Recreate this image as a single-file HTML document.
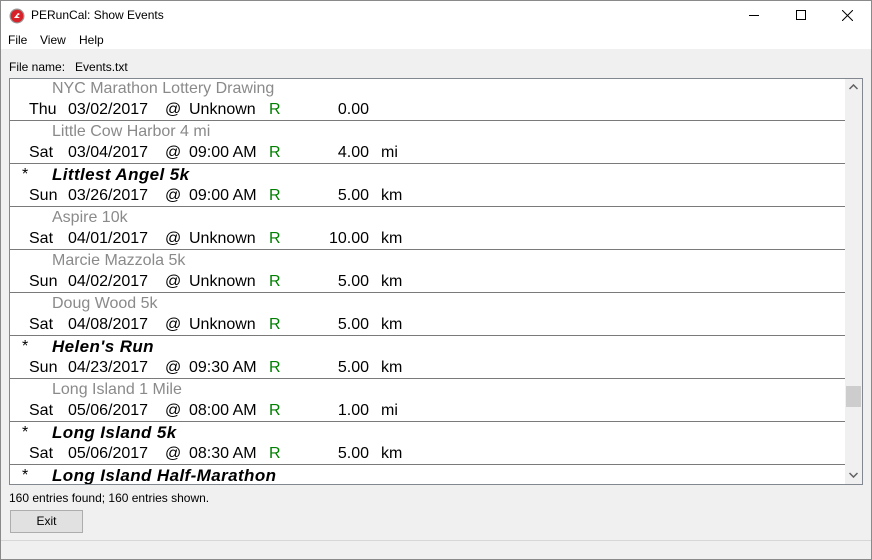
<!DOCTYPE html>
<html><head><meta charset="utf-8"><style>
*{margin:0;padding:0;box-sizing:border-box}
body{width:872px;height:560px;background:#f0f0f0;font-family:"Liberation Sans",sans-serif;position:relative;overflow:hidden}
.a{position:absolute;white-space:nowrap}
#title{left:0;top:0;width:872px;height:30px;background:#fff}
#menu{left:0;top:30px;width:872px;height:19px;background:#fff;font-size:12px}
#list{left:9px;top:78px;width:854px;height:407px;background:#fff;border:1px solid #828790;overflow:hidden}
.r{position:absolute;left:0;width:835px;height:43px;border-bottom:1px solid #7a7a7a;font-size:16px;color:#000}
.r span{position:absolute;white-space:nowrap;line-height:20px}
.t{left:42px;top:1px;color:#8a8a8a}
.b{left:42px;top:1px;font-weight:bold;font-style:italic;color:#000;font-size:17px;letter-spacing:0.4px}
.s{left:12px;top:1px}
.d{left:19px;top:22px}.dt{left:58px;top:22px}.at{left:155px;top:22px}.tm{left:179px;top:22px}
.R{left:259px;top:22px;color:#008000}.n{right:476px;top:22px}.u{left:371px;top:22px}
#sb{left:835px;top:0;width:17px;height:405px;background:#f0f0f0}
</style></head><body>
<div id="title" class="a">
<svg class="a" style="left:9px;top:8px" width="16" height="16" viewBox="0 0 16 16"><circle cx="8" cy="8" r="7.5" fill="#999"/><circle cx="8" cy="8" r="6.3" fill="#d8222a"/><path d="M5 10 L9 5 L11 6 L8 8 L11 10 Z" fill="#fff"/></svg>
<div class="a" style="left:31px;top:8px;font-size:12px">PERunCal: Show Events</div>
<div class="a" style="left:749px;top:15px;width:10px;height:1px;background:#000"></div>
<div class="a" style="left:796px;top:10px;width:10px;height:10px;border:1px solid #000"></div>
<svg class="a" style="left:842px;top:10px" width="11" height="11"><path d="M0 0L11 11M11 0L0 11" stroke="#000" stroke-width="1"/></svg>
</div>
<div id="menu" class="a"><span class="a" style="left:8px;top:3px">File</span><span class="a" style="left:40px;top:3px">View</span><span class="a" style="left:79px;top:3px">Help</span></div>
<div class="a" style="left:9px;top:60px;font-size:12px">File name:&nbsp;&nbsp;&nbsp;Events.txt</div>
<div id="list" class="a">
<div class="r" style="top:-1px"><span class="t">NYC Marathon Lottery Drawing</span><span class="d">Thu</span><span class="dt">03/02/2017</span><span class="at">@</span><span class="tm">Unknown</span><span class="R">R</span><span class="n">0.00</span></div>
<div class="r" style="top:42px"><span class="t">Little Cow Harbor 4 mi</span><span class="d">Sat</span><span class="dt">03/04/2017</span><span class="at">@</span><span class="tm">09:00 AM</span><span class="R">R</span><span class="n">4.00</span><span class="u">mi</span></div>
<div class="r" style="top:85px"><span class="s">*</span><span class="b">Littlest Angel 5k</span><span class="d">Sun</span><span class="dt">03/26/2017</span><span class="at">@</span><span class="tm">09:00 AM</span><span class="R">R</span><span class="n">5.00</span><span class="u">km</span></div>
<div class="r" style="top:128px"><span class="t">Aspire 10k</span><span class="d">Sat</span><span class="dt">04/01/2017</span><span class="at">@</span><span class="tm">Unknown</span><span class="R">R</span><span class="n">10.00</span><span class="u">km</span></div>
<div class="r" style="top:171px"><span class="t">Marcie Mazzola 5k</span><span class="d">Sun</span><span class="dt">04/02/2017</span><span class="at">@</span><span class="tm">Unknown</span><span class="R">R</span><span class="n">5.00</span><span class="u">km</span></div>
<div class="r" style="top:214px"><span class="t">Doug Wood 5k</span><span class="d">Sat</span><span class="dt">04/08/2017</span><span class="at">@</span><span class="tm">Unknown</span><span class="R">R</span><span class="n">5.00</span><span class="u">km</span></div>
<div class="r" style="top:257px"><span class="s">*</span><span class="b">Helen's Run</span><span class="d">Sun</span><span class="dt">04/23/2017</span><span class="at">@</span><span class="tm">09:30 AM</span><span class="R">R</span><span class="n">5.00</span><span class="u">km</span></div>
<div class="r" style="top:300px"><span class="t">Long Island 1 Mile</span><span class="d">Sat</span><span class="dt">05/06/2017</span><span class="at">@</span><span class="tm">08:00 AM</span><span class="R">R</span><span class="n">1.00</span><span class="u">mi</span></div>
<div class="r" style="top:343px"><span class="s">*</span><span class="b">Long Island 5k</span><span class="d">Sat</span><span class="dt">05/06/2017</span><span class="at">@</span><span class="tm">08:30 AM</span><span class="R">R</span><span class="n">5.00</span><span class="u">km</span></div>
<div class="r" style="top:386px"><span class="s">*</span><span class="b">Long Island Half-Marathon</span></div>
<div id="sb" class="a">
<svg class="a" style="left:4px;top:5px" width="9" height="6"><path d="M0.5 5L4.5 1L8.5 5" stroke="#606060" stroke-width="1.5" fill="none"/></svg>
<div class="a" style="left:1px;top:307px;width:15px;height:21px;background:#cdcdcd"></div>
<svg class="a" style="left:4px;top:393px" width="9" height="6"><path d="M0.5 1L4.5 5L8.5 1" stroke="#606060" stroke-width="1.5" fill="none"/></svg>
</div>
</div>
<div class="a" style="left:9px;top:491px;font-size:12px">160 entries found; 160 entries shown.</div>
<div class="a" style="left:10px;top:510px;width:73px;height:23px;background:#e1e1e1;border:1px solid #adadad;font-size:12px;text-align:center;line-height:21px">Exit</div>
<div class="a" style="left:0;top:540px;width:872px;height:1px;background:#d7d7d7"></div>
<div class="a" style="left:0;top:0;width:872px;height:560px;border:1px solid #8a8a8a"></div>
</body></html>
